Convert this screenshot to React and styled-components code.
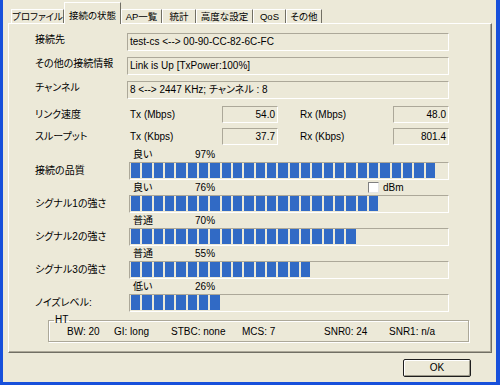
import React from "react";
import styled, { createGlobalStyle } from "styled-components";

const GlobalStyle = createGlobalStyle`
  html, body {
    margin: 0;
    padding: 0;
    background: #ece9d8;
  }
  body {
    font-family: "Liberation Sans", "Noto Sans CJK JP", sans-serif;
    font-size: 10px;
    color: #000;
    font-feature-settings: "palt";
  }
`;

const Window = styled.div`
  width: 500px;
  height: 385px;
  box-sizing: border-box;
  background: #ece9d8;
  border-left: 3px solid #1750db;
  border-right: 4px solid #1750db;
  border-bottom: 3px solid #1750db;
  display: flex;
  flex-direction: column;
`;

const TabControl = styled.div`
  flex: 1;
  display: flex;
  flex-direction: column;
  margin: 0 4px 0 5px;
`;

const TabStrip = styled.div`
  display: flex;
  align-items: flex-end;
  height: 23px;
  padding-left: 3px;
`;

const Tab = styled.div`
  position: relative;
  box-sizing: border-box;
  width: ${(p) => p.$width}px;
  height: ${(p) => (p.$active ? 22 : 14)}px;
  margin-bottom: ${(p) => (p.$active ? -1 : 0)}px;
  z-index: ${(p) => (p.$active ? 2 : 1)};
  background: #ece9d8;
  border-top: 1px solid #fff;
  border-left: 1px solid #fff;
  border-right: 1px solid #716f64;
  display: flex;
  align-items: ${(p) => (p.$active ? "flex-start" : "center")};
  padding-top: ${(p) => (p.$active ? 7 : 0)}px;
  justify-content: center;
  font-size: 9.5px;
  line-height: 12px;
  white-space: nowrap;
`;

const Panel = styled.div`
  flex: 1;
  box-sizing: border-box;
  border-top: 1px solid #fff;
  border-left: 1px solid #fff;
  border-right: 1px solid #716f64;
  border-bottom: 1px solid #716f64;
  box-shadow: inset -1px -1px 0 #aca899;
  padding: 9px 0 0 26px;
  display: flex;
  flex-direction: column;
`;

const InfoList = styled.div`
  display: flex;
  flex-direction: column;
  gap: 6px;
`;

const Row = styled.div`
  display: grid;
  grid-template-columns: 92px 322px;
  align-items: ${(p) => p.$align || "center"};
`;

const Label = styled.div`
  line-height: 12px;
  padding-top: ${(p) => p.$top || 0}px;
  white-space: nowrap;
`;

const Sunken = styled.div`
  box-sizing: border-box;
  border-top: 1px solid #aca899;
  border-left: 1px solid #aca899;
  border-bottom: 1px solid #fff;
  border-right: 1px solid #fff;
`;

const Field = styled(Sunken)`
  height: 18px;
  padding: 0 2px;
  line-height: 16px;
  white-space: nowrap;
`;

const SpeedList = styled.div`
  display: flex;
  flex-direction: column;
  gap: 5px;
  margin-top: 7px;
`;

const SpeedCells = styled.div`
  display: grid;
  grid-template-columns: 95px 56px 115px 56px;
  align-items: center;
`;

const Unit = styled.div`
  padding-left: ${(p) => p.$pad}px;
  line-height: 12px;
  white-space: nowrap;
`;

const ValueBox = styled(Sunken)`
  height: 17px;
  padding-right: 2px;
  text-align: right;
  line-height: 15px;
`;

const MeterList = styled.div`
  display: flex;
  flex-direction: column;
  margin-top: 2px;
`;

const Meter = styled.div`
  display: grid;
  grid-template-columns: 92px 322px;
  grid-template-rows: 15px 18px;
`;

const MeterLabel = styled.div`
  grid-column: 1;
  grid-row: 2;
  align-self: center;
  line-height: 12px;
  white-space: nowrap;
`;

const Caption = styled.div`
  grid-column: 2;
  grid-row: 1;
  display: grid;
  grid-template-columns: 62px 173px auto;
  align-items: center;
  padding-left: 6px;
  line-height: 15px;
`;

const CheckLabel = styled.label`
  display: flex;
  align-items: center;
  gap: 4px;
  line-height: 12px;
`;

const CheckBox = styled.span`
  width: 11px;
  height: 11px;
  box-sizing: border-box;
  background: #fff;
  border-top: 1px solid #808080;
  border-left: 1px solid #808080;
  border-bottom: 1px solid #e6e6e6;
  border-right: 1px solid #e6e6e6;
`;

const Track = styled(Sunken)`
  grid-column: 2;
  grid-row: 2;
  margin-left: 2px;
  height: 18px;
  padding: 0 1px 1px 1px;
  display: flex;
  gap: 2px;
`;

const Block = styled.span`
  width: 9.33px;
  height: 15px;
  background: #316ac5;
`;

const Group = styled.fieldset`
  margin: 2px 0 0 13px;
  width: 421px;
  box-sizing: border-box;
  padding: 0 0 3px 5px;
  border: 1px solid #aca899;
  box-shadow: inset 1px 1px 0 #fff, 1px 1px 0 #fff;
`;

const Legend = styled.legend`
  padding: 0 1px;
  line-height: 12px;
`;

const HtItems = styled.div`
  display: grid;
  grid-template-columns: 47px 57px 71px 82px 65px auto;
  margin-left: 13px;
  line-height: 12px;
  white-space: nowrap;
`;

const Footer = styled.div`
  height: 29px;
  display: flex;
  justify-content: flex-end;
  align-items: flex-start;
  padding: 6px 25px 0 0;
  box-sizing: border-box;
`;

const Button = styled.button`
  width: 68px;
  height: 18px;
  box-sizing: border-box;
  border: 1px solid #1e1e1e;
  border-radius: 2px;
  background: #ece9d8;
  box-shadow: inset 1px 1px 0 #fff, inset -1px -1px 0 #9d9a8a;
  font: inherit;
  line-height: 14px;
  padding: 0;
  color: #000;
`;

const tabs = [
  { name: "プロファイル", width: 53 },
  { name: "接続の状態", width: 57, active: true },
  { name: "AP一覧", width: 41 },
  { name: "統計", width: 34 },
  { name: "高度な設定", width: 57 },
  { name: "QoS", width: 33 },
  { name: "その他", width: 36 },
];

const info = [
  { label: "接続先", value: "test-cs <--> 00-90-CC-82-6C-FC" },
  { label: "その他の接続情報", value: "Link is Up [TxPower:100%]" },
  { label: "チャンネル", value: "8 <--> 2447 KHz; チャンネル : 8" },
];

const speeds = [
  { label: "リンク速度", tx: "Tx (Mbps)", txValue: "54.0", rx: "Rx (Mbps)", rxValue: "48.0" },
  { label: "スループット", tx: "Tx (Kbps)", txValue: "37.7", rx: "Rx (Kbps)", rxValue: "801.4" },
];

const meters = [
  { label: "接続の品質", word: "良い", pct: 97, blocks: 27 },
  { label: "シグナル1の強さ", word: "良い", pct: 76, blocks: 22, dbm: true },
  { label: "シグナル2の強さ", word: "普通", pct: 70, blocks: 20 },
  { label: "シグナル3の強さ", word: "普通", pct: 55, blocks: 16 },
  { label: "ノイズレベル:", word: "低い", pct: 26, blocks: 8 },
];

const ht = ["BW: 20", "GI: long", "STBC: none", "MCS: 7", "SNR0: 24", "SNR1: n/a"];

export default function App() {
  return (
    <>
      <GlobalStyle />
      <Window>
        <TabControl>
          <TabStrip>
            {tabs.map((t) => (
              <Tab key={t.name} $width={t.width} $active={t.active}>
                {t.name}
              </Tab>
            ))}
          </TabStrip>
          <Panel>
            <InfoList>
              {info.map((r) => (
                <Row key={r.label} $align="start">
                  <Label $top={1}>{r.label}</Label>
                  <Field>{r.value}</Field>
                </Row>
              ))}
            </InfoList>
            <SpeedList>
              {speeds.map((s) => (
                <Row key={s.label}>
                  <Label>{s.label}</Label>
                  <SpeedCells>
                    <Unit $pad={3}>{s.tx}</Unit>
                    <ValueBox>{s.txValue}</ValueBox>
                    <Unit $pad={22}>{s.rx}</Unit>
                    <ValueBox>{s.rxValue}</ValueBox>
                  </SpeedCells>
                </Row>
              ))}
            </SpeedList>
            <MeterList>
              {meters.map((m) => (
                <Meter key={m.label}>
                  <Caption>
                    <span>{m.word}</span>
                    <span>{m.pct}%</span>
                    {m.dbm && (
                      <CheckLabel>
                        <CheckBox />
                        dBm
                      </CheckLabel>
                    )}
                  </Caption>
                  <MeterLabel>{m.label}</MeterLabel>
                  <Track>
                    {Array.from({ length: m.blocks }, (_, i) => (
                      <Block key={i} />
                    ))}
                  </Track>
                </Meter>
              ))}
            </MeterList>
            <Group>
              <Legend>HT</Legend>
              <HtItems>
                {ht.map((h) => (
                  <span key={h}>{h}</span>
                ))}
              </HtItems>
            </Group>
          </Panel>
        </TabControl>
        <Footer>
          <Button>OK</Button>
        </Footer>
      </Window>
    </>
  );
}
